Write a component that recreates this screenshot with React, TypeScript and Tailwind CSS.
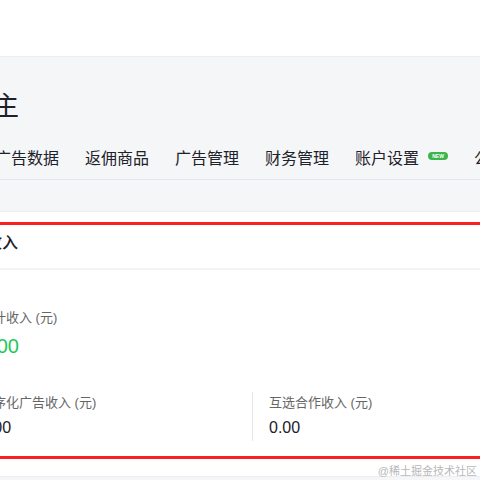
const font = "font-['Liberation_Sans','Noto_Sans_CJK_SC',sans-serif]";

const tabs = ["首页", "广告数据", "返佣商品", "广告管理", "财务管理", "账户设置", "公告中心"];

function NewBadge() {
  return (
    <span className="ml-[9px] -mt-[6px] flex h-[8px] w-[20px] items-center justify-center rounded-full bg-[#3db54a] text-[5px] font-bold leading-none text-white">
      NEW
    </span>
  );
}

function Stat({ label, value, big }: { label: string; value: string; big?: boolean }) {
  return (
    <div className="flex flex-col">
      <span className="text-[13px] leading-[20px] text-[#666]">{label}</span>
      {big ? (
        <span className="mt-[4px] text-[20px] leading-[28px] text-[#1ec85a]">{value}</span>
      ) : (
        <span className="mt-[3px] text-[16px] font-medium leading-[24px] text-[#1d2129]">{value}</span>
      )}
    </div>
  );
}

export default function App() {
  return (
    <div className={`relative h-[480px] w-[480px] overflow-hidden bg-[#f5f6f8] ${font}`}>
      <div className="h-[57px] border-b border-[#eceef1] bg-white" />
      <div className="-ml-[63px] w-[620px]">
        <div className="pl-[4px] pt-[31px] text-[26px] leading-[36px] text-[#1d2129]">广告主</div>
        <div className="mt-[11px] flex h-[45px] items-center gap-[26px] border-b border-[#e5e6eb] pt-[4px] text-[16px] text-[#1d2129]">
          {tabs.map((t) => (
            <div key={t} className="flex items-center">
              <span>{t}</span>
              {t === "账户设置" && <NewBadge />}
            </div>
          ))}
        </div>

        <div className="mt-[31px] border-y border-[#eceef1] bg-white pb-[17px] pt-[10px]">
          <div className="border-y-[3px] border-[#fb2020]">
            <div className="h-[45px] border-b-2 border-[#f2f3f5] pl-[49px] pt-[6px] text-[16px] font-medium leading-[24px] text-[#1d2129]">
              收入
            </div>
            <div className="px-[43px] pb-[15px] pt-[38px]">
              <Stat label="累计收入 (元)" value="0.00" big />
              <div className="mt-[32px] flex">
                <div className="flex h-[49px] w-[272px] items-center">
                  <Stat label="程序化广告收入 (元)" value="0.00" />
                </div>
                <div className="flex h-[49px] items-center border-l border-[#e5e6eb] pl-[16px]">
                  <Stat label="互选合作收入 (元)" value="0.00" />
                </div>
              </div>
            </div>
          </div>
        </div>
      </div>
      <span className="absolute bottom-[2px] right-[3px] text-[11px] leading-[14px] text-[#b8b8b8]">
        @稀土掘金技术社区
      </span>
    </div>
  );
}
